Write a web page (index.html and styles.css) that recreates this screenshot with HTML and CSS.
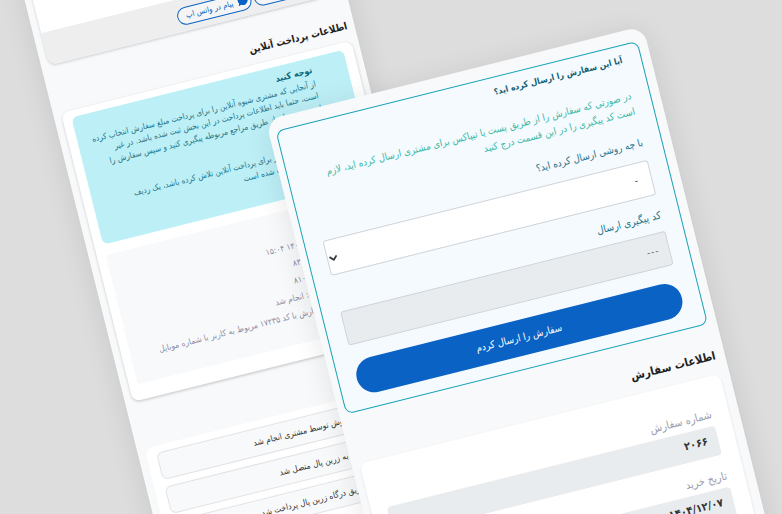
FILE: index.html
```html
<!DOCTYPE html>
<html lang="fa" dir="rtl">
<head>
<meta charset="utf-8">
<title>سفارش</title>
<link rel="stylesheet" href="styles.css">
</head>
<body>
<main class="stage">
  <section class="phone rear">
    <div class="contact-card">
      <div class="contact-body"></div>
      <div class="contact-foot">
        <a class="pill pill-sms">تماس</a>
        <a class="pill pill-wa">
          <svg class="wa-icon" viewBox="0 0 12 12"><path d="M6 .5a5.5 5.5 0 0 0-4.7 8.3L.5 11.5l2.8-.8A5.5 5.5 0 1 0 6 .5z"/></svg>
          <span>پیام در واتس اپ</span>
        </a>
      </div>
    </div>
    <h2 class="rear-title">اطلاعات پرداخت آنلاین</h2>
    <div class="pay-card">
      <div class="notice">
        <div class="notice-title">توجه کنید</div>
        <div class="nl">از آنجایی که مشتری شیوه آنلاین را برای پرداخت مبلغ سفارش انتخاب کرده</div>
        <div class="nl">است، حتما باید اطلاعات پرداخت در این بخش ثبت شده باشد. در غیر</div>
        <div class="nl">این صورت باید از طریق مراجع مربوطه پیگیری کنید و سپس سفارش را</div>
        <div class="nl">ثبت کنید</div>
        <div class="nl blank">&nbsp;</div>
        <div class="nl">در صورتی که کاربر برای پرداخت آنلاین تلاش کرده باشد، یک ردیف</div>
        <div class="nl">در زیر برای آن ثبت شده است</div>
      </div>
      <div class="pay-log">
        <div class="ll">تاریخ ثبت: ۱۴۰۴/۰۵/۰۴ ۱۵:۰۴</div>
        <div class="ll">مبلغ پرداختی: ۸۳۰۰۰۰</div>
        <div class="ll">شناسه پرداخت: ۸۱۰۰۰</div>
        <div class="ll">وضعیت این پرداخت: انجام شد</div>
        <div class="ll">توضیح پرداخت: سفارش با کد ۱۷۲۳۵ مربوط به کاربر با شماره موبایل</div>
      </div>
    </div>
    <div class="steps">
      <div class="step">پرداخت آنلاین به روش توسط مشتری انجام شد</div>
      <div class="step">کاربر برای پرداخت به زرین پال متصل شد</div>
      <div class="step">مبلغ سفارش از طریق درگاه زرین پال پرداخت شد</div>
    </div>
  </section>

  <section class="phone front">
    <div class="ship-box">
      <h3 class="ship-title">آیا این سفارش را ارسال کرده اید؟</h3>
      <p class="ship-note">در صورتی که سفارش را از طریق پست یا تیپاکس برای مشتری ارسال کرده اید، لازم<br>است کد پیگیری را در این قسمت درج کنید</p>
      <div class="ship-label lab1">با چه روشی ارسال کرده اید؟</div>
      <div class="field select">
        <span class="field-val">-</span>
        <svg class="chev" viewBox="0 0 10 7"><path d="M1 1.2l4 4 4-4"/></svg>
      </div>
      <div class="ship-label lab2">کد پیگیری ارسال</div>
      <div class="field readonly"><span class="field-val dim">---</span></div>
      <button class="send" type="button">سفارش را ارسال کردم</button>
    </div>
    <h2 class="order-title">اطلاعات سفارش</h2>
    <div class="order-card">
      <div class="o-label">شماره سفارش</div>
      <div class="o-value">۲۰۶۶</div>
      <div class="o-label">تاریخ خرید</div>
      <div class="o-value">۱۴۰۴/۱۲/۰۷</div>
      <div class="o-label">مبلغ</div>
      <div class="o-value">۸۳</div>
    </div>
  </section>
</main>
</body>
</html>
```
FILE: styles.css
```css
* { box-sizing: border-box; }
html, body { margin: 0; padding: 0; }
body { font-family: "DejaVu Sans Condensed", "DejaVu Sans", sans-serif; font-stretch: condensed; background: #dcdcdc; }
.stage { position: relative; width: 782px; height: 514px; overflow: hidden; background: #dddddd; }

.phone {
  position: absolute;
  transform: rotate(-14deg);
  transform-origin: 100% 0;
  background: #f8f9fa;
  border-radius: 16px;
  box-shadow: 0 4px 28px rgba(0, 0, 0, .1);
  display: flex;
  flex-direction: column;
}
.rear { left: 10px; top: -97px; width: 314px; height: 760px; padding: 8px 7.5px 0; }
.front { left: 254px; top: 25.5px; width: 389px; height: 700px; padding: 12.5px 9.5px 0 7px; }

.contact-card {
  height: 83px;
  border-radius: 0 0 8px 8px;
  overflow: hidden;
  box-shadow: 0 1px 3px rgba(0, 0, 0, .2);
  flex: none;
}
.contact-body { height: 50px; background: #fff; }
.contact-foot {
  height: 33px;
  background: #eeeeee;
  display: flex;
  align-items: flex-start;
  gap: 3px;
  padding: 8.5px 12px 0 0;
}
.pill {
  height: 18px;
  border: 1px solid #0a62c4;
  border-radius: 9px;
  background: #f5f5f5;
  color: #0a62c4;
  font-size: 7.8px;
  display: flex;
  align-items: center;
  justify-content: center;
  gap: 4px;
  white-space: nowrap;
}
.pill-sms { width: 72px; }
.pill-wa { width: 76px; justify-content: flex-start; padding-right: 2px; }
.wa-icon { width: 11px; height: 11px; fill: #0a62c4; margin-top: -3px; flex: none; }

.rear-title {
  margin: 22px 0 3px;
  height: 24px;
  line-height: 24px;
  font-size: 10px;
  font-weight: 700;
  color: #222;
  white-space: nowrap;
}

.pay-card {
  height: 298px;
  background: #fff;
  border-radius: 8px;
  padding: 7px 9.5px 0;
  box-shadow: 0 1px 3px rgba(0, 0, 0, .22);
  flex: none;
}
.notice {
  height: 131px;
  background: #bdeff7;
  border-radius: 6px;
  padding: 4.5px 35px 0 0;
  color: #25788a;
  white-space: nowrap;
}
.notice-title { font-size: 9px; line-height: 15px; font-weight: 700; color: #0f6678; }
.nl { font-size: 8.2px; line-height: 12.5px; }
.pay-log {
  height: 133px;
  margin-top: 11px;
  background: #f8f9fa;
  border-radius: 2px;
  padding: 27.5px 30px 0 0;
  color: #8b8fa8;
  white-space: nowrap;
}
.ll { font-size: 8.5px; line-height: 17px; }

.steps {
  margin-top: 48px;
  background: #fff;
  border-radius: 8px;
  padding: 7px 10px 0;
  display: flex;
  flex-direction: column;
  gap: 7px;
  height: 180px;
  flex: none;
}
.step {
  height: 28px;
  line-height: 27px;
  background: #f8f9fa;
  border: 1px solid #e1e3e6;
  border-radius: 6px;
  padding-right: 30px;
  font-size: 8.5px;
  color: #333;
  white-space: nowrap;
  overflow: hidden;
}

.ship-box {
  height: 292.5px;
  background: #f5faff;
  border: 1px solid #17a2b8;
  border-radius: 8px;
  padding: 5px 18px 0;
  flex: none;
}
.ship-title { margin: 0; font-size: 8.6px; line-height: 18px; font-weight: 700; color: #105f72; white-space: nowrap; }
.ship-note { margin: 20px 0 0; font-size: 9.9px; line-height: 16.5px; color: #3bb9a3; white-space: nowrap; }
.ship-label { font-size: 10px; line-height: 16px; color: #1f7489; white-space: nowrap; }
.lab1 { margin-top: 15px; }
.lab2 { margin-top: 12px; font-size: 10.4px; }
.field {
  display: flex;
  align-items: center;
  justify-content: space-between;
  border: 1px solid #ced4da;
  border-radius: 3px;
}
.select { height: 36px; margin-top: 10px; background: #fff; padding: 0 13px 0 1px; }
.readonly { height: 35px; margin-top: 9px; background: #e9ecef; padding: 0 9px 0 1px; }
.field-val { font-size: 10px; color: #333; }
.dim { color: #666; letter-spacing: 1px; }
.chev { width: 9px; height: 7px; margin-top: 3px; fill: none; stroke: #343a40; stroke-width: 2; }
.send {
  display: block;
  width: 100%;
  height: 36px;
  margin-top: 16px;
  border: 0;
  border-radius: 18px;
  background: #0a62c4;
  color: #fff;
  font-family: inherit;
  font-stretch: inherit;
  font-size: 10px;
}

.order-title {
  margin: 22px 0 9px;
  height: 20px;
  line-height: 20px;
  font-size: 11.4px;
  font-weight: 700;
  color: #222;
  white-space: nowrap;
}
.order-card {
  background: #fff;
  border-radius: 8px;
  padding: 30px 17px 20px 16px;
  margin: 0 1px;
  box-shadow: 0 1px 3px rgba(0, 0, 0, .1);
}
.o-label { font-size: 11px; line-height: 16px; color: #9a9eae; margin-top: 13.5px; white-space: nowrap; }
.o-label:first-child { margin-top: 0; }
.o-value {
  height: 30px;
  line-height: 28px;
  margin-top: 3px;
  background: #e9ecef;
  border-radius: 4px;
  padding-right: 10px;
  font-size: 11px;
  font-weight: 700;
  color: #333;
}
```
